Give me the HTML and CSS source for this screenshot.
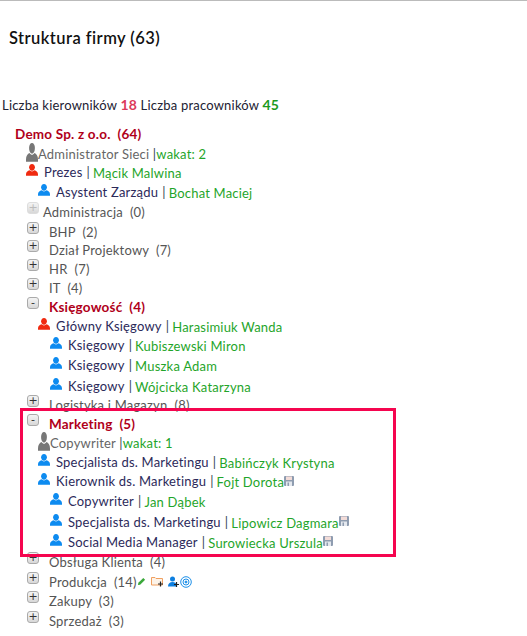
FILE: index.html
```html
<!DOCTYPE html>
<html lang="en">
<head>
  <meta charset="UTF-8">
  <meta name="viewport" content="width=device-width, initial-scale=1.0">
  <title>Struktura firmy</title>
  <link rel="stylesheet" href="styles.css">
</head>
<body>
  <svg class="defs" width="0" height="0">
    <symbol id="person" viewBox="0 0 12 12" preserveAspectRatio="none">
      <path d="M6 0c1.700 0 2.900 1.300 2.900 3.200S7.700 6.700 6 6.700 3.100 5.100 3.100 3.200 4.300 0 6 0z"/>
      <path d="M3.600 6.300C4.300 7 5.100 7.400 6 7.400s1.700-.4 2.400-1.100C10.400 6.800 12 8.200 12 10.400V11.800H0V10.400C0 8.200 1.600 6.800 3.600 6.300z"/>
    </symbol>
    <symbol id="disk" viewBox="0 0 10 10">
      <rect width="10" height="10" rx="1" fill="#8e9cb0"/>
      <rect x="2" y="0.500" width="6" height="3.500" fill="#f3dcd8"/>
      <rect x="2" y="5.500" width="6" height="4.500" fill="#e4e8ee"/>
      <rect x="3.500" y="6.500" width="1.500" height="3.500" fill="#8e9cb0"/>
    </symbol>
  </svg>

  <h1 class="title">Struktura firmy (63)</h1>
  <p class="totals">Liczba kierowników <b class="num-red">18</b> Liczba pracowników <b class="num-green">45</b></p>

  <ul class="tree">
    <li class="row root"><b>Demo Sp. z o.o.&nbsp; (64)</b></li>

    <li class="row h19 lvl1 vacant">
      <svg class="ico-big"><use href="#person"/></svg>
      <span class="pos">Administrator Sieci </span><span class="sep">|</span><span class="name">wakat: 2</span>
    </li>
    <li class="row h18 lvl1">
      <svg class="ico red"><use href="#person"/></svg>
      <span class="pos">Prezes</span><span class="sep">|</span><span class="name">Mącik Malwina</span>
    </li>
    <li class="row h21 lvl2">
      <svg class="ico blue"><use href="#person"/></svg>
      <span class="pos">Asystent Zarządu</span><span class="sep">|</span><span class="name">Bochat Maciej</span>
    </li>

    <li class="row h20 dept empty"><span class="box">+</span><span class="label">Administracja&nbsp; (0)</span></li>
    <li class="row h19 dept"><span class="box">+</span><span class="label">BHP&nbsp; (2)</span></li>
    <li class="row h18 dept"><span class="box">+</span><span class="label">Dział Projektowy&nbsp; (7)</span></li>
    <li class="row h19 dept"><span class="box">+</span><span class="label">HR&nbsp; (7)</span></li>
    <li class="row h18 dept"><span class="box">+</span><span class="label">IT&nbsp; (4)</span></li>
    <li class="row h19 dept open"><span class="box">-</span><b class="label">Księgowość&nbsp; (4)</b></li>

    <li class="row h19 lvl2">
      <svg class="ico red"><use href="#person"/></svg>
      <span class="pos">Główny Księgowy</span><span class="sep">|</span><span class="name">Harasimiuk Wanda</span>
    </li>
    <li class="row h20 lvl3">
      <svg class="ico blue"><use href="#person"/></svg>
      <span class="pos">Księgowy</span><span class="sep">|</span><span class="name">Kubiszewski Miron</span>
    </li>
    <li class="row h21 lvl3">
      <svg class="ico blue"><use href="#person"/></svg>
      <span class="pos">Księgowy</span><span class="sep">|</span><span class="name">Muszka Adam</span>
    </li>
    <li class="row h20 lvl3">
      <svg class="ico blue"><use href="#person"/></svg>
      <span class="pos">Księgowy</span><span class="sep">|</span><span class="name">Wójcicka Katarzyna</span>
    </li>

    <li class="row h18 dept"><span class="box">+</span><span class="label">Logistyka i Magazyn&nbsp; (8)</span></li>
    <li class="row h20 dept open"><span class="box">-</span><b class="label">Marketing&nbsp; (5)</b></li>

    <li class="row h18 lvl2 vacant">
      <svg class="ico-big"><use href="#person"/></svg>
      <span class="pos">Copywriter </span><span class="sep">|</span><span class="name">wakat: 1</span>
    </li>
    <li class="row h18 lvl2">
      <svg class="ico blue"><use href="#person"/></svg>
      <span class="pos">Specjalista ds. Marketingu</span><span class="sep">|</span><span class="name">Babińczyk Krystyna</span>
    </li>
    <li class="row h20 lvl2">
      <svg class="ico blue"><use href="#person"/></svg>
      <span class="pos">Kierownik ds. Marketingu</span><span class="sep">|</span><span class="name">Fojt Dorota</span><svg class="disk"><use href="#disk"/></svg>
    </li>
    <li class="row h21 lvl3">
      <svg class="ico blue"><use href="#person"/></svg>
      <span class="pos">Copywriter</span><span class="sep">|</span><span class="name">Jan Dąbek</span>
    </li>
    <li class="row h20 lvl3">
      <svg class="ico blue"><use href="#person"/></svg>
      <span class="pos">Specjalista ds. Marketingu</span><span class="sep">|</span><span class="name">Lipowicz Dagmara</span><svg class="disk"><use href="#disk"/></svg>
    </li>
    <li class="row h21 lvl3">
      <svg class="ico blue"><use href="#person"/></svg>
      <span class="pos">Social Media Manager</span><span class="sep">|</span><span class="name">Surowiecka Urszula</span><svg class="disk"><use href="#disk"/></svg>
    </li>

    <li class="row h20 dept"><span class="box">+</span><span class="label">Obsługa Klienta&nbsp; (4)</span></li>
    <li class="row h19 dept">
      <span class="box">+</span><span class="label">Produkcja&nbsp; (14)</span>
      <span class="tools">
        <svg class="tool pencil" viewBox="0 0 10 10"><path d="M1 9l.5-2.500L7 1l2 2-5.500 5.500z" fill="#3aa83a"/></svg>
        <svg class="tool folder" viewBox="0 0 13 11"><path d="M.5 1.500h3.500l1 1h6.500v6.500H.5z" fill="#fdf3e8" stroke="#f0a060"/><path d="M9.500 5.500v5M7 8h5" stroke="#222" stroke-width="1.200"/></svg>
        <svg class="tool adduser" viewBox="0 0 11 11"><circle cx="4.500" cy="3" r="2.500" fill="#0d7fe0"/><path d="M0 10.500c0-3 1.800-4.500 4.500-4.500s4.500 1.500 4.500 4.500z" fill="#0d7fe0"/><path d="M8.500 6v5M6 8.500h5" stroke="#222" stroke-width="1.200"/></svg>
        <svg class="tool target" viewBox="0 0 12 12" fill="none" stroke="#1e90e8"><circle cx="6" cy="6" r="5.300"/><circle cx="6" cy="6" r="3"/><circle cx="6" cy="6" r="1" fill="#1e90e8"/></svg>
      </span>
    </li>
    <li class="row h20 dept"><span class="box">+</span><span class="label">Zakupy&nbsp; (3)</span></li>
    <li class="row h19 dept"><span class="box">+</span><span class="label">Sprzedaż&nbsp; (3)</span></li>
  </ul>

  <div class="highlight"></div>
</body>
</html>
```

FILE: styles.css
```css
html, body {
  margin: 0;
  padding: 0;
}
body {
  position: relative;
  height: 636px;
  overflow: hidden;
  border-top: 1px solid #bbb;
  box-sizing: border-box;
  font-family: Lato, "Noto Sans", sans-serif;
  font-size: 13px;
  letter-spacing: 0.2px;
  color: #333;
  background: #fff;
}
.defs {
  position: absolute;
}
.title {
  margin: 0;
  padding: 27px 0 0 9px;
  height: 68px;
  box-sizing: content-box;
  font-size: 16.500px;
  line-height: 20px;
  font-weight: 600;
  letter-spacing: 0.45px;
  color: #111;
}
.totals {
  margin: 0;
  padding: 0 0 0 2px;
  height: 28px;
  line-height: 18px;
  color: #223;
}
.num-red {
  color: #dc3a5a;
  font-size: 14px;
}
.num-green {
  color: #1c9a1c;
  font-size: 14px;
}
.tree {
  list-style: none;
  margin: 0;
  padding: 0;
}
.row {
  display: flex;
  align-items: center;
  white-space: pre;
}
.h18 { height: 18.500px; }
.h19 { height: 19px; }
.h20 { height: 20px; }
.h21 { height: 20.500px; }
.root {
  height: 20px;
  padding-left: 15px;
  color: #b0001a;
  font-size: 13.500px;
}
.dept {
  padding-left: 27px;
  color: #555;
}
.lvl1 { padding-left: 26px; }
.lvl2 { padding-left: 38px; }
.lvl3 { padding-left: 50px; }
.box {
  display: block;
  flex: none;
  width: 12px;
  height: 12px;
  margin: -8px 10px 0 0;
  border: 1px solid #aaa;
  border-radius: 3px;
  box-sizing: border-box;
  background: linear-gradient(#f4f4f4, #d8d8d8);
  font-family: "DejaVu Sans", sans-serif;
  font-size: 11px;
  font-weight: 400;
  line-height: 9px;
  text-align: center;
  color: #333;
  letter-spacing: 0;
}
.empty .box {
  margin-right: 4px;
  border-color: #ddd;
  color: #bbb;
}
.open .label {
  color: #b0001a;
  font-size: 13.500px;
}
.ico {
  width: 12px;
  height: 12px;
  margin: -4px 6px 0 0;
  flex: none;
}
.ico-big {
  width: 12px;
  height: 19px;
  margin-top: -3px;
  fill: #777;
  flex: none;
}
.red { fill: #f02a10; }
.blue { fill: #0d8bf0; }
.pos {
  color: #2c2a5a;
}
.vacant .pos {
  color: #666;
}
.sep {
  margin: 0 3px 0 4px;
  color: #345;
}
.vacant .sep {
  margin: 0;
}
.name {
  padding-top: 2px;
  color: #1fa52a;
}
.vacant .name {
  padding-top: 0;
}
.disk {
  width: 10px;
  height: 10px;
  margin-top: -1px;
}
.tools {
  display: flex;
  align-items: center;
}
.tool {
  display: block;
  flex: none;
}
.pencil {
  width: 9px;
  height: 9px;
}
.folder {
  width: 13px;
  height: 11px;
  margin-left: 5px;
}
.adduser {
  width: 11px;
  height: 11px;
  margin-left: 4px;
}
.target {
  width: 12px;
  height: 12px;
  margin-left: 1px;
}
/* annotation frame drawn over the tree */
.highlight {
  position: absolute;
  left: 20px;
  top: 407px;
  width: 376px;
  height: 149px;
  border: 3px solid #f5054f;
  box-sizing: border-box;
}
```
